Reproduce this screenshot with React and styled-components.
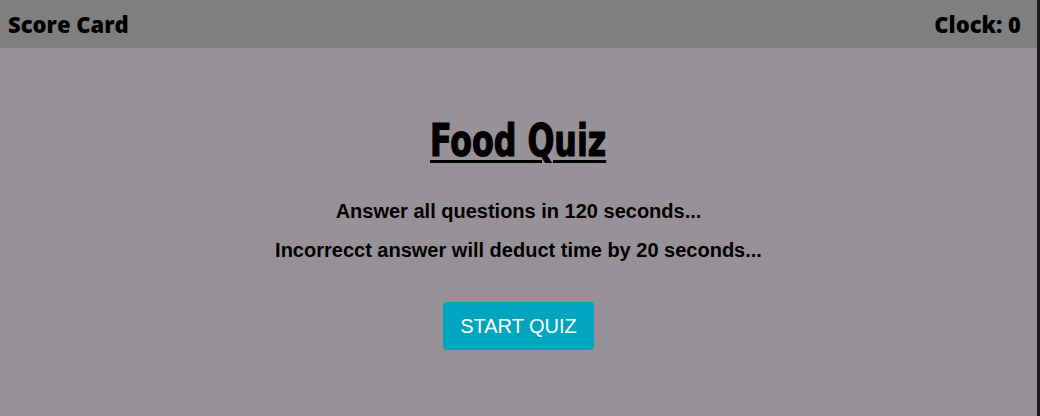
import React, { useState } from "react";
import styled, { createGlobalStyle } from "styled-components";

const GlobalStyle = createGlobalStyle`
  html, body {
    margin: 0;
    padding: 0;
    background: #979297;
  }
  body {
    font-family: "Liberation Sans", Arial, sans-serif;
  }
`;

const Page = styled.div`
  height: 416px;
  box-sizing: border-box;
  border-right: 3px solid #1c1c1c;
  background: #979297;
  overflow: hidden;
`;

const Header = styled.header`
  height: 48px;
  display: flex;
  align-items: center;
  justify-content: space-between;
  padding: 0 16px 0 8px;
  background: #7f7f7f;
  font-family: "Open Sans", Lato, sans-serif;
  font-weight: 800;
  font-size: 22px;
  color: #000;
`;

const Main = styled.main`
  display: flex;
  flex-direction: column;
  align-items: center;
  text-align: center;
`;

const Title = styled.h1`
  margin: 68px 0 0;
  font-family: "DejaVu Sans Condensed", sans-serif;
  font-weight: 700;
  font-size: 44px;
  line-height: 50px;
  text-decoration: underline;
  text-decoration-thickness: 3px;
  text-underline-offset: 4px;
  -webkit-text-stroke: 1.2px #000;
  transform: scaleX(0.8);
`;

const Line = styled.p`
  margin: ${(p) => p.$top}px 0 0;
  font-weight: 700;
  font-size: 20px;
  line-height: 24px;
`;

const StartButton = styled.button`
  margin-top: 40px;
  width: 151px;
  height: 48px;
  border: none;
  border-radius: 4px;
  background: #00a5c0;
  color: #fff;
  font-family: "Liberation Sans", Arial, sans-serif;
  font-size: 20px;
  cursor: pointer;
`;

export default function App() {
  const [clock] = useState(0);
  return (
    <Page>
      <GlobalStyle />
      <Header>
        <span>Score Card</span>
        <span>Clock: {clock}</span>
      </Header>
      <Main>
        <Title>Food Quiz</Title>
        <Line $top={33}>Answer all questions in 120 seconds...</Line>
        <Line $top={15}>Incorrecct answer will deduct time by 20 seconds...</Line>
        <StartButton type="button">START QUIZ</StartButton>
      </Main>
    </Page>
  );
}
